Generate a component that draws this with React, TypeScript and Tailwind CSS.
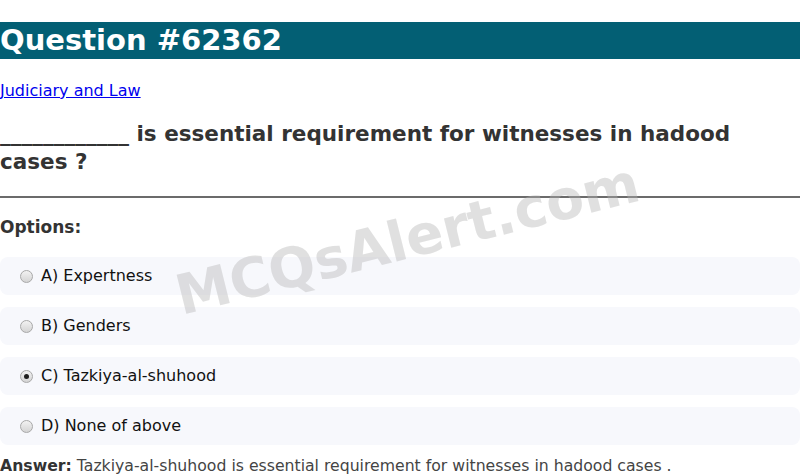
import React from "react";

const options = [
  { label: "A) Expertness", checked: false },
  { label: "B) Genders", checked: false },
  { label: "C) Tazkiya-al-shuhood", checked: true },
  { label: "D) None of above", checked: false },
];

function Radio({ checked }: { checked: boolean }) {
  return (
    <span className="flex h-[13px] w-[13px] items-center justify-center rounded-full border border-[#a8a8a8] bg-gradient-to-b from-[#f2f2f2] to-[#d4d4d4]">
      {checked && <span className="h-[5px] w-[5px] rounded-full bg-[#1e1e1e]" />}
    </span>
  );
}

export default function App() {
  return (
    <div className="relative h-[476px] w-[800px] overflow-hidden bg-white font-['DejaVu_Sans',sans-serif]">
      <div className="mt-[22px] h-[37px] bg-[#035f74] text-[29px] font-bold leading-[37px] text-white">
        Question #62362
      </div>

      <a href="#" className="mt-[23px] block text-[16px] leading-[18px] text-[#0000ee] underline">
        Judiciary and Law
      </a>

      <h2 className="mt-[20px] text-[21.5px] font-bold leading-[28px] text-[#333]">
        ____________ is essential requirement for witnesses in hadood cases ?
      </h2>

      <hr className="mt-[20px] border-t-2 border-[#6b6b6b]" />

      <h3 className="mt-[18px] text-[17px] font-bold leading-[22px] text-[#333]">Options:</h3>

      <div className="mt-[19px] flex flex-col gap-[12px]">
        {options.map((o) => (
          <div
            key={o.label}
            className="flex h-[38px] items-center gap-[8px] rounded-lg bg-[#f7f8fc] pl-[20px] text-[16px] text-[#111]"
          >
            <Radio checked={o.checked} />
            <span>{o.label}</span>
          </div>
        ))}
      </div>

      <p className="mt-[11px] text-[15.7px] leading-[20px] text-[#444]">
        <b className="text-[#333]">Answer:</b> Tazkiya-al-shuhood is essential requirement for witnesses in hadood cases .
      </p>

      <div className="pointer-events-none absolute left-[170px] top-[212px] -rotate-[14deg] text-[55px] font-bold leading-none text-[#b4b4b4] opacity-40">
        MCQsAlert.com
      </div>
    </div>
  );
}
